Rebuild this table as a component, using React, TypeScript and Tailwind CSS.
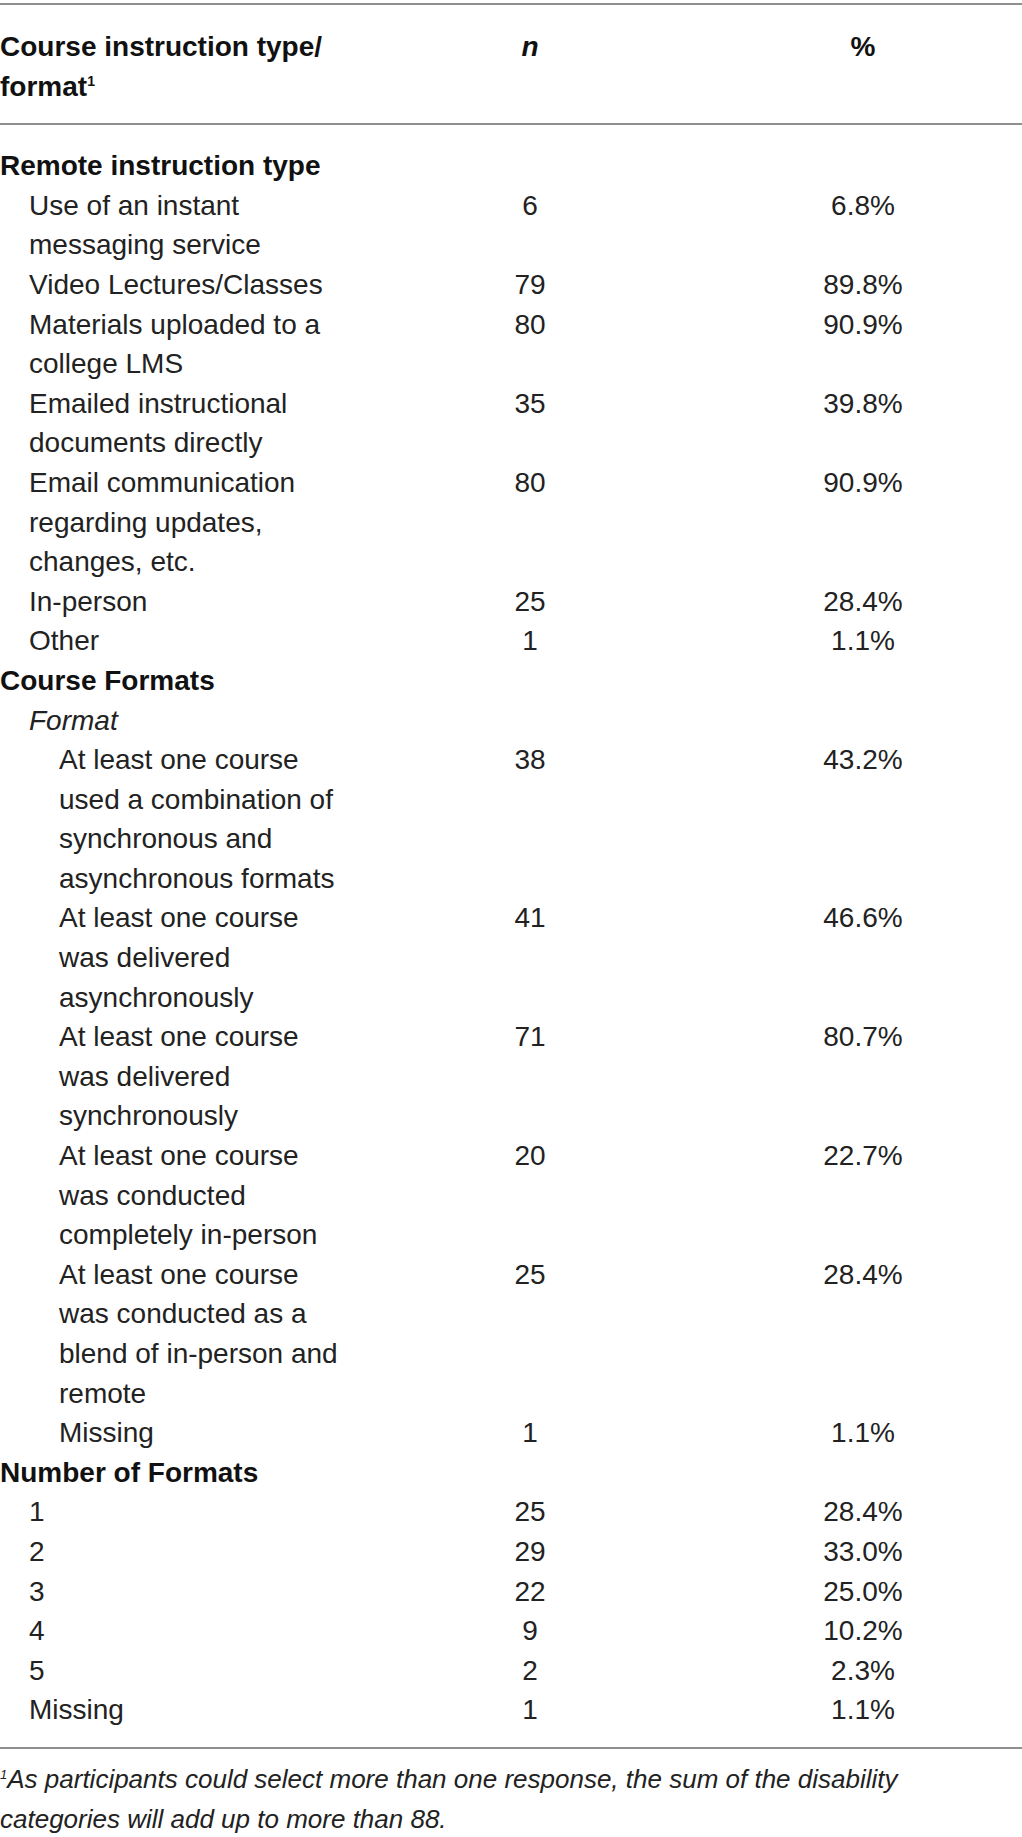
type Row = {
  label: string[];
  level: 0 | 1 | 2;
  n?: string;
  pct?: string;
  style?: "bold" | "italic";
};

const rows: Row[] = [
  { label: ["Remote instruction type"], level: 0, style: "bold" },
  { label: ["Use of an instant", "messaging service"], level: 1, n: "6", pct: "6.8%" },
  { label: ["Video Lectures/Classes"], level: 1, n: "79", pct: "89.8%" },
  { label: ["Materials uploaded to a", "college LMS"], level: 1, n: "80", pct: "90.9%" },
  { label: ["Emailed instructional", "documents directly"], level: 1, n: "35", pct: "39.8%" },
  { label: ["Email communication", "regarding updates,", "changes, etc."], level: 1, n: "80", pct: "90.9%" },
  { label: ["In-person"], level: 1, n: "25", pct: "28.4%" },
  { label: ["Other"], level: 1, n: "1", pct: "1.1%" },
  { label: ["Course Formats"], level: 0, style: "bold" },
  { label: ["Format"], level: 1, style: "italic" },
  {
    label: ["At least one course", "used a combination of", "synchronous and", "asynchronous formats"],
    level: 2,
    n: "38",
    pct: "43.2%",
  },
  { label: ["At least one course", "was delivered", "asynchronously"], level: 2, n: "41", pct: "46.6%" },
  { label: ["At least one course", "was delivered", "synchronously"], level: 2, n: "71", pct: "80.7%" },
  { label: ["At least one course", "was conducted", "completely in-person"], level: 2, n: "20", pct: "22.7%" },
  {
    label: ["At least one course", "was conducted as a", "blend of in-person and", "remote"],
    level: 2,
    n: "25",
    pct: "28.4%",
  },
  { label: ["Missing"], level: 2, n: "1", pct: "1.1%" },
  { label: ["Number of Formats"], level: 0, style: "bold" },
  { label: ["1"], level: 1, n: "25", pct: "28.4%" },
  { label: ["2"], level: 1, n: "29", pct: "33.0%" },
  { label: ["3"], level: 1, n: "22", pct: "25.0%" },
  { label: ["4"], level: 1, n: "9", pct: "10.2%" },
  { label: ["5"], level: 1, n: "2", pct: "2.3%" },
  { label: ["Missing"], level: 1, n: "1", pct: "1.1%" },
];

const indent = {
  0: "pl-0",
  1: "pl-[29px]",
  2: "pl-[59px]",
};

export default function App() {
  return (
    <div
      className="w-[1022px] bg-white pt-[3px] text-[#222]"
      style={{ fontFamily: '"Liberation Sans", Arial, sans-serif' }}
    >
      {/* Header */}
      <div className="grid grid-cols-[360px_340px_1fr] border-y-2 border-[#8f8f8f] pt-[22px] pb-[17px] text-[28px] font-bold leading-[39.6px] text-[#111]">
        <div>
          Course instruction type/
          <br />
          format<sup className="top-[-10px] text-[14px]">1</sup>
        </div>
        <div className="text-center italic">n</div>
        <div className="pl-[4px] text-center">%</div>
      </div>

      {/* Body */}
      <div className="pt-[21px] pb-[17px] text-[28px] leading-[39.6px]">
        {rows.map((row, i) => (
          <div key={i} className="grid grid-cols-[360px_340px_1fr]">
            <div
              className={`${indent[row.level]} whitespace-nowrap ${
                row.style === "bold" ? "font-bold text-[#111]" : row.style === "italic" ? "italic" : ""
              }`}
            >
              {row.label.map((line, j) => (
                <div key={j}>{line}</div>
              ))}
            </div>
            <div className="text-center">{row.n}</div>
            <div className="pl-[4px] text-center">{row.pct}</div>
          </div>
        ))}
      </div>

      {/* Footnote */}
      <div className="border-t-2 border-[#8f8f8f] pt-[11px] text-[26px] italic leading-[39.6px]">
        <sup className="top-[-9px] text-[13px]">1</sup>As participants could select more than one response, the sum of the disability
        <br />
        categories will add up to more than 88.
      </div>
    </div>
  );
}
